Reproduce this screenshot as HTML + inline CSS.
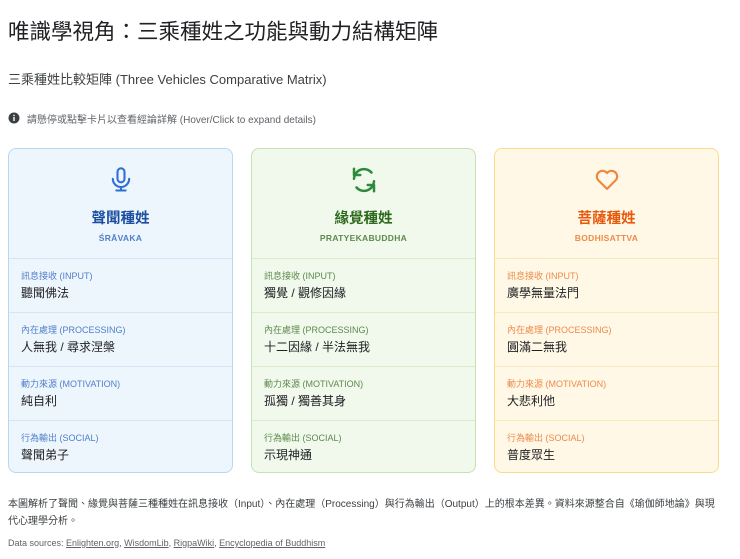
<!DOCTYPE html>
<html><head><meta charset="utf-8">
<style>
*{margin:0;padding:0;box-sizing:border-box}
body{width:740px;height:559px;background:#fff;font-family:"Liberation Sans","Noto Sans CJK TC",sans-serif;color:#202124;position:relative;overflow:hidden}
.abs{position:absolute;white-space:nowrap}
h1{position:absolute;left:8px;top:15px;font-size:21.5px;font-weight:400;color:#202124;white-space:nowrap}
.card{position:absolute;top:148px;width:225px;height:325px;border:1px solid;border-radius:8px;overflow:hidden}
.head{height:110px;border-bottom:1px solid;text-align:center;position:relative}
.head svg{position:absolute;left:50%;top:16px;transform:translateX(-50%)}
.t{position:absolute;top:58px;width:100%;font-size:14.5px;font-weight:700;text-align:center}
.s{position:absolute;top:84px;width:100%;font-size:8.5px;font-weight:700;letter-spacing:.3px;text-align:center}
.row{height:54px;border-bottom:1px solid;padding:11px 0 0 12px}
.row:last-child{border-bottom:none}
.l{font-size:9px;line-height:12px}
.v{font-size:12px;line-height:16px;margin-top:3px;color:#202124}
.b{left:8px;background:#eef6fd;border-color:#b9d7f3}
.b .head,.b .row{border-color:#d3e5f6}
.b .t{color:#1c4fa1}.b .s,.b .l{color:#4f7fc9}
.g{left:251px;background:#f1f8ec;border-color:#c6e2b2}
.g .head,.g .row{border-color:#d9ecc9}
.g .t{color:#2d6a1e}.g .s,.g .l{color:#5d8a4c}
.o{left:494px;background:#fff8e6;border-color:#fadc8c}
.o .head,.o .row{border-color:#f8e9bd}
.o .t{color:#e8590c}.o .s,.o .l{color:#ee8a4a}
a{color:#5f6368;text-decoration:underline}
</style></head><body>
<h1>唯識學視角：三乘種姓之功能與動力結構矩陣</h1>
<div class="abs" style="left:8px;top:69px;font-size:13px;color:#3c4043">三乘種姓比較矩陣 (Three Vehicles Comparative Matrix)</div>
<svg class="abs" style="left:8px;top:112px" width="12" height="12" viewBox="0 0 24 24"><circle cx="12" cy="12" r="11" fill="#3c4043"/><rect x="10.6" y="10" width="2.8" height="8" fill="#fff"/><circle cx="12" cy="6.8" r="1.6" fill="#fff"/></svg>
<div class="abs" style="left:27px;top:111px;font-size:10px;color:#5f6368">請懸停或點擊卡片以查看經論詳解 (Hover/Click to expand details)</div>

<div class="card b"><div class="head">
<svg width="28" height="30" viewBox="0 0 24 24" fill="none" stroke="#2f6fd6" stroke-width="1.8" stroke-linecap="round"><rect x="9" y="2" width="6" height="12" rx="3"/><path d="M5 11a7 7 0 0 0 14 0M12 18v3M8 21h8"/></svg>
<div class="t">聲聞種姓</div><div class="s">ŚRĀVAKA</div></div>
<div class="row"><div class="l">訊息接收 (INPUT)</div><div class="v">聽聞佛法</div></div>
<div class="row"><div class="l">內在處理 (PROCESSING)</div><div class="v">人無我 / 尋求涅槃</div></div>
<div class="row"><div class="l">動力來源 (MOTIVATION)</div><div class="v">純自利</div></div>
<div class="row"><div class="l">行為輸出 (SOCIAL)</div><div class="v">聲聞弟子</div></div>
</div>

<div class="card g"><div class="head">
<svg width="30" height="30" viewBox="0 0 24 24" fill="none" stroke="#2e8b3d" stroke-width="2" stroke-linecap="round" stroke-linejoin="round"><path d="M4 11a8 8 0 0 1 14-5M4 3v5h5"/><path d="M20 13a8 8 0 0 1-14 5M20 21v-5h-5"/></svg>
<div class="t">緣覺種姓</div><div class="s">PRATYEKABUDDHA</div></div>
<div class="row"><div class="l">訊息接收 (INPUT)</div><div class="v">獨覺 / 觀修因緣</div></div>
<div class="row"><div class="l">內在處理 (PROCESSING)</div><div class="v">十二因緣 / 半法無我</div></div>
<div class="row"><div class="l">動力來源 (MOTIVATION)</div><div class="v">孤獨 / 獨善其身</div></div>
<div class="row"><div class="l">行為輸出 (SOCIAL)</div><div class="v">示現神通</div></div>
</div>

<div class="card o"><div class="head">
<svg width="30" height="28" viewBox="0 0 24 24" fill="none" stroke="#f0853f" stroke-width="1.8" stroke-linejoin="round"><path d="M12 20.5 4.3 12.8a4.8 4.8 0 0 1 7.7-5.9 4.8 4.8 0 0 1 7.7 5.9Z"/></svg>
<div class="t">菩薩種姓</div><div class="s">BODHISATTVA</div></div>
<div class="row"><div class="l">訊息接收 (INPUT)</div><div class="v">廣學無量法門</div></div>
<div class="row"><div class="l">內在處理 (PROCESSING)</div><div class="v">圓滿二無我</div></div>
<div class="row"><div class="l">動力來源 (MOTIVATION)</div><div class="v">大悲利他</div></div>
<div class="row"><div class="l">行為輸出 (SOCIAL)</div><div class="v">普度眾生</div></div>
</div>

<div class="abs" style="left:8px;top:496px;font-size:10px;line-height:17px;color:#3c4043;white-space:normal;width:710px">本圖解析了聲聞、緣覺與菩薩三種種姓在訊息接收（Input）、內在處理（Processing）與行為輸出（Output）上的根本差異。資料來源整合自《瑜伽師地論》與現代心理學分析。</div>
<div class="abs" style="left:8px;top:538px;font-size:9px;color:#5f6368">Data sources: <a>Enlighten.org</a>, <a>WisdomLib</a>, <a>RigpaWiki</a>, <a>Encyclopedia of Buddhism</a></div>
</body></html>
